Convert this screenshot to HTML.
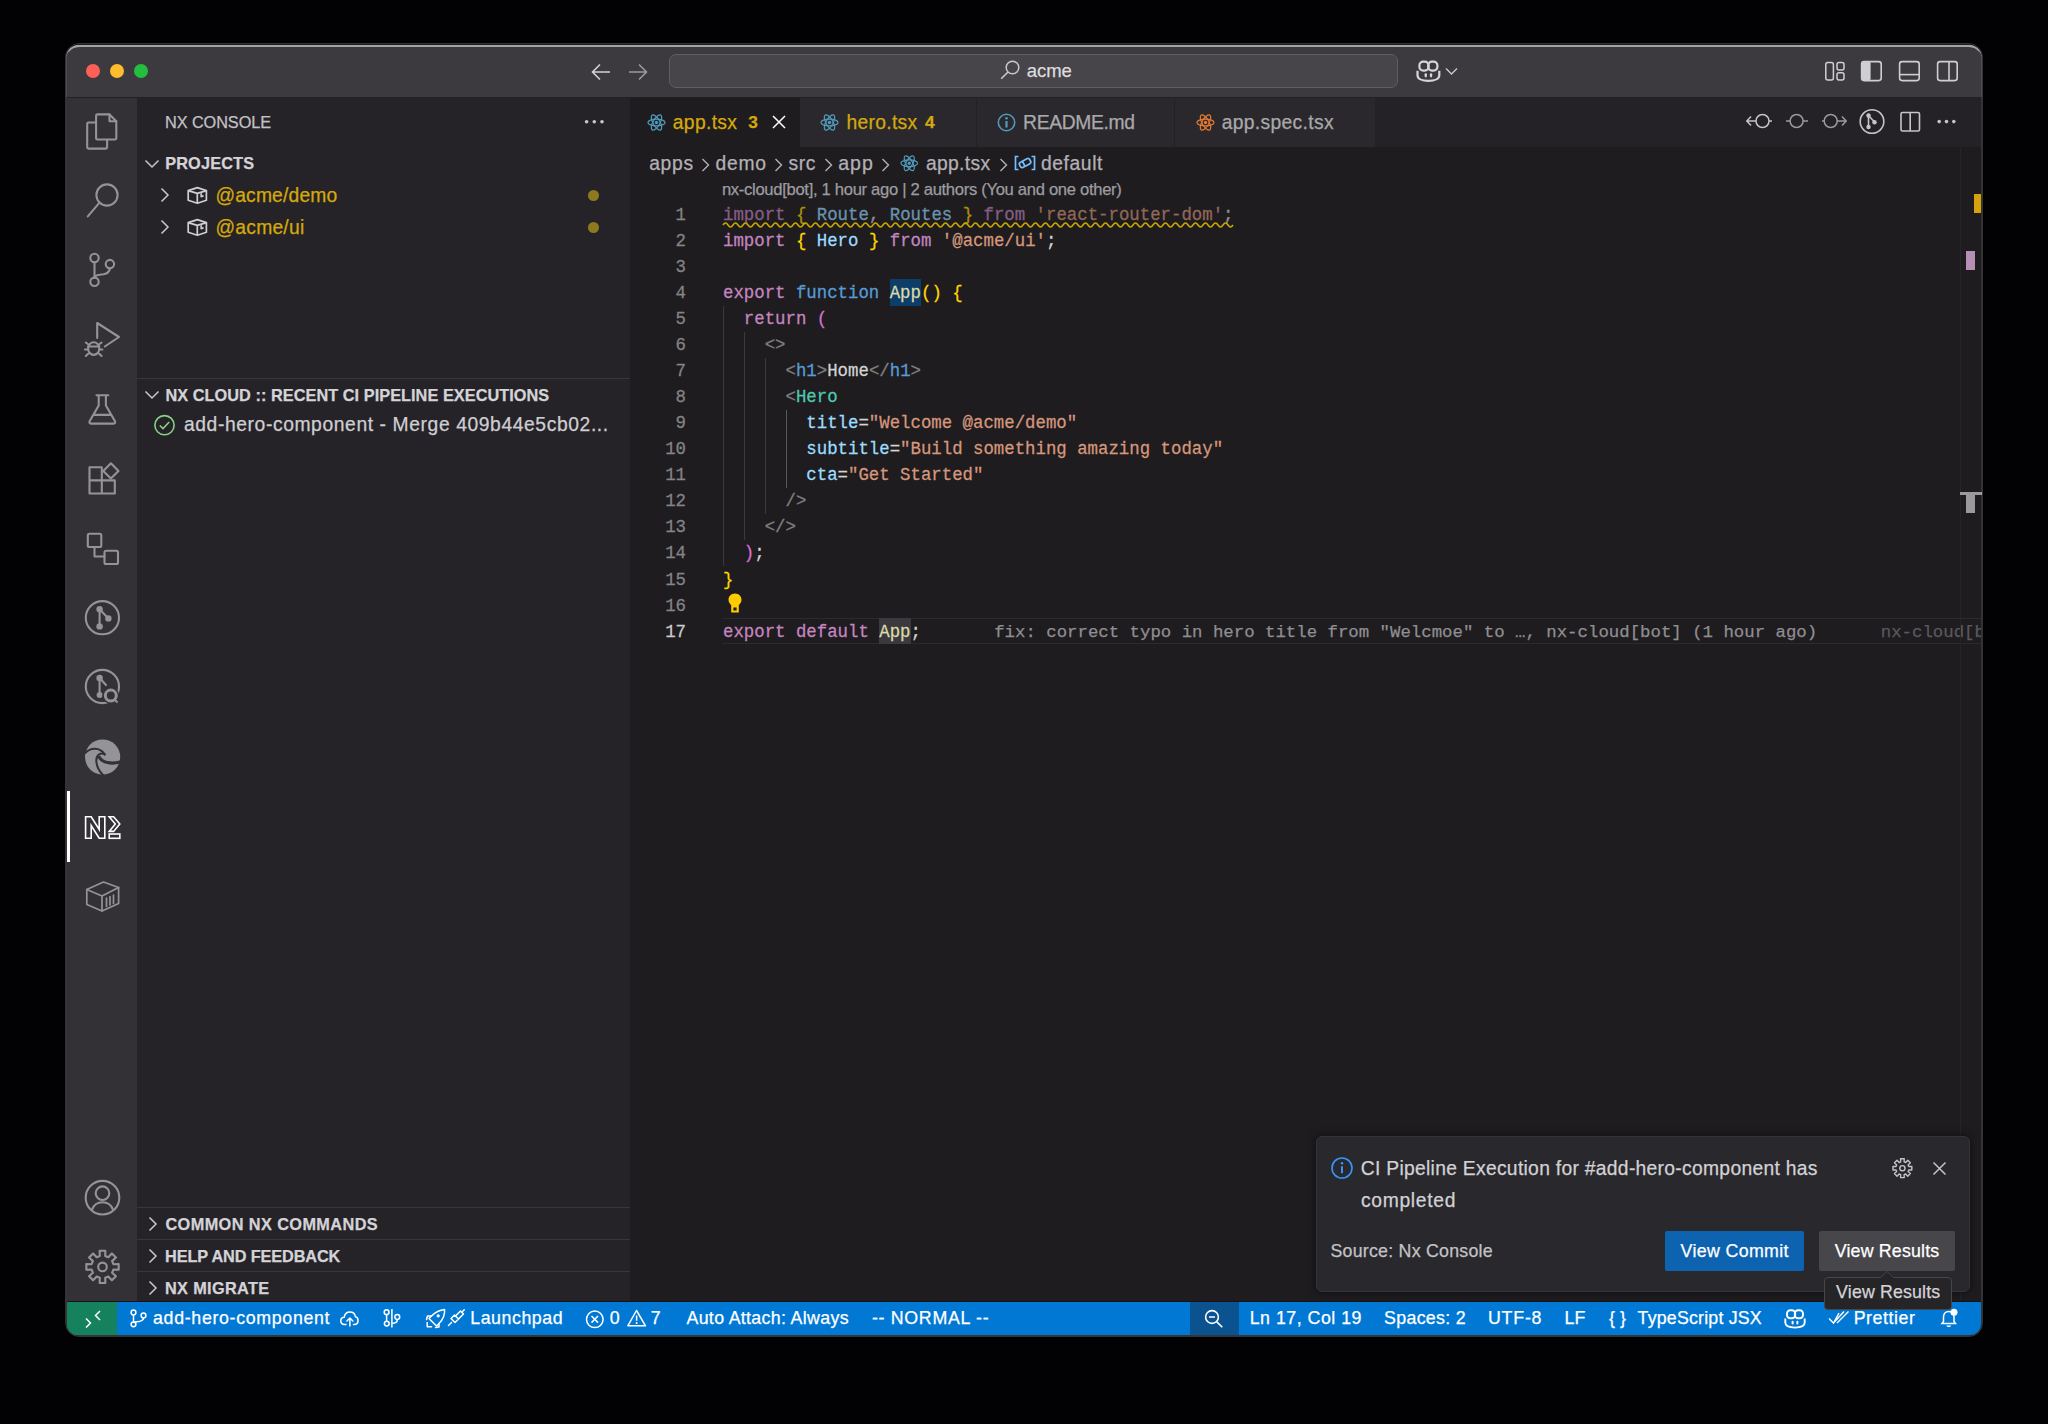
<!DOCTYPE html>
<html><head><meta charset="utf-8">
<style>
*{box-sizing:border-box;margin:0;padding:0}
html,body{width:2048px;height:1424px;background:#020204;overflow:hidden;font-family:"Liberation Sans",sans-serif;position:relative}
.a{position:absolute}
.t{position:absolute;white-space:pre;line-height:1;-webkit-text-stroke:0.25px currentColor}
svg{position:absolute;overflow:visible}
</style></head>
<body>
<div class="a" style="left:65px;top:42.5px;width:1918px;height:1294.5px;background:transparent;border:1px solid rgba(110,110,114,0.45);border-radius:14px;"></div>
<div class="a" style="left:66px;top:44px;width:1916px;height:1292px;background:#1e1c1f;border-radius:13px;"></div>
<div class="a" style="left:66px;top:44.8px;width:1916px;height:52.2px;background:#3c3a3e;border-radius:13px 13px 0 0;border-top:2.2px solid #a3a2a5;"></div>
<div class="a" style="left:86px;top:64px;width:14px;height:14px;background:#fe5f57;border-radius:50%;"></div>
<div class="a" style="left:110px;top:64px;width:14px;height:14px;background:#febc2e;border-radius:50%;"></div>
<div class="a" style="left:134px;top:64px;width:14px;height:14px;background:#24be3e;border-radius:50%;"></div>
<svg style="left:591px;top:63px" width="20" height="18" viewBox="0 0 20 18"><path d="M19 9H2M9 1.5L1.5 9 9 16.5" fill="none" stroke="#d2d1d4" stroke-width="1.6"/></svg>
<svg style="left:628px;top:63px" width="20" height="18" viewBox="0 0 20 18"><path d="M1 9H18M11 1.5L18.5 9 11 16.5" fill="none" stroke="#9a999c" stroke-width="1.6"/></svg>
<div class="a" style="left:669px;top:54px;width:729px;height:34px;background:#47454a;border-radius:7px;border:1.5px solid #5f5d62;"></div>
<svg style="left:999px;top:59px" width="22" height="22" viewBox="0 0 22 22"><circle cx="13.5" cy="8.5" r="6.3" fill="none" stroke="#c9c8cb" stroke-width="1.5"/><path d="M9 13L2.2 19.8" stroke="#c9c8cb" stroke-width="1.6"/></svg>
<div class="t" style="left:1026.81px;top:62.24px;font-size:18.5px;color:#dddcdf;letter-spacing:-0.053px;">acme</div>
<svg style="left:1416px;top:60px" width="26" height="22" viewBox="0 0 26 22"><g fill="none" stroke="#d6d5d8" stroke-width="2.2"><rect x="3.4" y="1.6" width="9.2" height="9" rx="3.8"/><rect x="12.2" y="1.6" width="9.2" height="9" rx="3.8"/><path d="M1.5 10.8V15.2C1.5 18.8 6.2 20.8 12.4 20.8S23.3 18.8 23.3 15.2V10.8"/></g><rect x="8.6" y="13.2" width="2.3" height="4.2" rx="1.1" fill="#d6d5d8"/><rect x="13.9" y="13.2" width="2.3" height="4.2" rx="1.1" fill="#d6d5d8"/></svg>
<svg style="left:1445px;top:67px" width="14" height="9" viewBox="0 0 14 9"><path d="M1 1.5L6.5 7 12 1.5" fill="none" stroke="#c9c8cb" stroke-width="1.4"/></svg>
<svg style="left:1824px;top:61px" width="22" height="21" viewBox="0 0 22 21"><g fill="none" stroke="#cfced1" stroke-width="1.5"><rect x="1.8" y="1.4" width="7.6" height="17.6" rx="2"/><rect x="13" y="1.6" width="7" height="7.4" rx="2"/><rect x="13" y="11.8" width="7" height="7.2" rx="2"/></g></svg>
<svg style="left:1860px;top:60px" width="23" height="22" viewBox="0 0 23 22"><rect x="1.6" y="1.6" width="19.6" height="19" rx="2.5" fill="none" stroke="#cfced1" stroke-width="1.6"/><rect x="1.6" y="1.6" width="9" height="19" rx="2" fill="#cfced1"/></svg>
<svg style="left:1898px;top:60px" width="23" height="22" viewBox="0 0 23 22"><rect x="1.6" y="1.6" width="19.6" height="19" rx="2.5" fill="none" stroke="#cfced1" stroke-width="1.6"/><path d="M1.6 14.6H21.2" stroke="#cfced1" stroke-width="1.6"/></svg>
<svg style="left:1936px;top:60px" width="23" height="22" viewBox="0 0 23 22"><rect x="1.6" y="1.6" width="19.6" height="19" rx="2.5" fill="none" stroke="#cfced1" stroke-width="1.6"/><path d="M13 1.6V20.6" stroke="#cfced1" stroke-width="1.6"/></svg>
<div class="a" style="left:67px;top:97px;width:70px;height:1206px;background:#333136;"></div>
<div class="a" style="left:137px;top:97px;width:493px;height:1206px;background:#252328;"></div>
<div class="a" style="left:630px;top:97px;width:1351px;height:1206px;background:#1e1c1f;"></div>
<div class="a" style="left:630px;top:97px;width:1351px;height:50px;background:#242226;"></div>
<div class="a" style="left:630px;top:97px;width:170px;height:50px;background:#1e1c1f;"></div>
<div class="a" style="left:800px;top:97px;width:177px;height:50px;background:#2a282c;border-right:1px solid #232125;"></div>
<div class="a" style="left:977px;top:97px;width:198px;height:50px;background:#2a282c;border-right:1px solid #232125;"></div>
<div class="a" style="left:1175px;top:97px;width:200px;height:50px;background:#2a282c;"></div>
<svg style="left:646.5px;top:112.5px" width="19" height="19" viewBox="0 0 20 20"><g fill="none" stroke="#519aba" stroke-width="1.3"><ellipse cx="10" cy="10" rx="9" ry="3.6"/><ellipse cx="10" cy="10" rx="9" ry="3.6" transform="rotate(60 10 10)"/><ellipse cx="10" cy="10" rx="9" ry="3.6" transform="rotate(120 10 10)"/></g><circle cx="10" cy="10" r="1.8" fill="#519aba"/></svg>
<div class="t" style="left:672.78px;top:112.56px;font-size:19.3px;color:#d4a90c;letter-spacing:0.345px;">app.tsx</div>
<div class="t" style="left:748.21px;top:114.26px;font-size:17.3px;color:#d4a90c;font-weight:bold;letter-spacing:0.000px;">3</div>
<svg style="left:772px;top:115px" width="14" height="14" viewBox="0 0 14 14"><path d="M1 1L13 13M13 1L1 13" stroke="#ffffff" stroke-width="1.5"/></svg>
<svg style="left:820px;top:112.5px" width="19" height="19" viewBox="0 0 20 20"><g fill="none" stroke="#519aba" stroke-width="1.3"><ellipse cx="10" cy="10" rx="9" ry="3.6"/><ellipse cx="10" cy="10" rx="9" ry="3.6" transform="rotate(60 10 10)"/><ellipse cx="10" cy="10" rx="9" ry="3.6" transform="rotate(120 10 10)"/></g><circle cx="10" cy="10" r="1.8" fill="#519aba"/></svg>
<div class="t" style="left:846.60px;top:112.56px;font-size:19.3px;color:#d4a90c;letter-spacing:0.277px;">hero.tsx</div>
<div class="t" style="left:924.94px;top:114.26px;font-size:17.3px;color:#d4a90c;font-weight:bold;letter-spacing:0.000px;">4</div>
<svg style="left:997px;top:112.5px" width="19" height="19" viewBox="0 0 19 19"><circle cx="9.5" cy="9.5" r="8.2" fill="none" stroke="#519aba" stroke-width="1.6"/><rect x="8.4" y="8" width="2.2" height="6.5" fill="#519aba"/><circle cx="9.5" cy="5.3" r="1.3" fill="#519aba"/></svg>
<div class="t" style="left:1023.11px;top:112.56px;font-size:19.3px;color:#a9a8ab;letter-spacing:-0.355px;">README.md</div>
<svg style="left:1195.5px;top:112.5px" width="19" height="19" viewBox="0 0 20 20"><g fill="none" stroke="#e37933" stroke-width="1.3"><ellipse cx="10" cy="10" rx="9" ry="3.6"/><ellipse cx="10" cy="10" rx="9" ry="3.6" transform="rotate(60 10 10)"/><ellipse cx="10" cy="10" rx="9" ry="3.6" transform="rotate(120 10 10)"/></g><circle cx="10" cy="10" r="1.8" fill="#e37933"/></svg>
<div class="t" style="left:1221.68px;top:112.56px;font-size:19.3px;color:#a9a8ab;letter-spacing:0.331px;">app.spec.tsx</div>
<svg style="left:1745px;top:112px" width="28" height="20" viewBox="0 0 28 20"><g fill="none" stroke="#c5c5c5" stroke-width="1.5"><circle cx="17.5" cy="9" r="6.5"/><path d="M11 9H2M6 4.5L1.8 9 6 13.5M24 9h3"/></g></svg>
<svg style="left:1784px;top:112px" width="28" height="20" viewBox="0 0 28 20"><g fill="none" stroke="#9a999c" stroke-width="1.5"><circle cx="12.6" cy="9" r="6.5"/><path d="M2 9h4M19 9h5"/></g></svg>
<svg style="left:1821px;top:112px" width="28" height="20" viewBox="0 0 28 20"><g fill="none" stroke="#9a999c" stroke-width="1.5"><circle cx="9.7" cy="9" r="6.5"/><path d="M16 9h9M21 4.5L25.2 9 21 13.5M1 9h2"/></g></svg>
<svg style="left:1859px;top:108px" width="26" height="26" viewBox="0 0 26 26"><g fill="none" stroke="#c5c5c5" stroke-width="1.6"><circle cx="13" cy="13.5" r="11.8"/><path d="M9.5 7.5V19M9.5 7.5L15.5 14"/></g><circle cx="9.5" cy="7.5" r="2.2" fill="#c5c5c5"/><circle cx="15.5" cy="14.2" r="2.2" fill="#c5c5c5"/><circle cx="9.5" cy="19" r="2.2" fill="#c5c5c5"/></svg>
<svg style="left:1900px;top:111px" width="21" height="21" viewBox="0 0 21 21"><g fill="none" stroke="#c5c5c5" stroke-width="1.6"><rect x="1" y="1.5" width="18.5" height="18.5" rx="1.5"/><path d="M10.2 1.5V20"/></g></svg>
<svg style="left:1937px;top:119px" width="20" height="6" viewBox="0 0 20 6"><circle cx="2.2" cy="2.6" r="1.8" fill="#c5c5c5"/><circle cx="9.5" cy="2.6" r="1.8" fill="#c5c5c5"/><circle cx="16.8" cy="2.6" r="1.8" fill="#c5c5c5"/></svg>
<div class="t" style="left:649.18px;top:153.96px;font-size:19.3px;color:#b3b1b6;letter-spacing:0.688px;">apps</div>
<svg style="left:701px;top:157.5px" width="9" height="14" viewBox="0 0 9 14"><path d="M1.5 1L7.5 7 1.5 13" fill="none" stroke="#b3b1b6" stroke-width="1.4"/></svg>
<div class="t" style="left:715.48px;top:153.96px;font-size:19.3px;color:#b3b1b6;letter-spacing:0.781px;">demo</div>
<svg style="left:774px;top:157.5px" width="9" height="14" viewBox="0 0 9 14"><path d="M1.5 1L7.5 7 1.5 13" fill="none" stroke="#b3b1b6" stroke-width="1.4"/></svg>
<div class="t" style="left:788.47px;top:153.96px;font-size:19.3px;color:#b3b1b6;letter-spacing:0.648px;">src</div>
<svg style="left:824px;top:157.5px" width="9" height="14" viewBox="0 0 9 14"><path d="M1.5 1L7.5 7 1.5 13" fill="none" stroke="#b3b1b6" stroke-width="1.4"/></svg>
<div class="t" style="left:838.17px;top:153.73px;font-size:19.58px;color:#b3b1b6;letter-spacing:0.979px;">app</div>
<svg style="left:881px;top:157.5px" width="9" height="14" viewBox="0 0 9 14"><path d="M1.5 1L7.5 7 1.5 13" fill="none" stroke="#b3b1b6" stroke-width="1.4"/></svg>
<svg style="left:900px;top:154px" width="18.5" height="18.5" viewBox="0 0 20 20"><g fill="none" stroke="#519aba" stroke-width="1.3"><ellipse cx="10" cy="10" rx="9" ry="3.6"/><ellipse cx="10" cy="10" rx="9" ry="3.6" transform="rotate(60 10 10)"/><ellipse cx="10" cy="10" rx="9" ry="3.6" transform="rotate(120 10 10)"/></g><circle cx="10" cy="10" r="1.8" fill="#519aba"/></svg>
<div class="t" style="left:925.88px;top:153.96px;font-size:19.3px;color:#b3b1b6;letter-spacing:0.345px;">app.tsx</div>
<svg style="left:999px;top:157.5px" width="9" height="14" viewBox="0 0 9 14"><path d="M1.5 1L7.5 7 1.5 13" fill="none" stroke="#b3b1b6" stroke-width="1.4"/></svg>
<svg style="left:1014px;top:155px" width="22" height="16" viewBox="0 0 22 16"><g fill="none" stroke="#75beff" stroke-width="1.7"><path d="M4.5 1.5H1.5V14.5H4.5M17.5 1.5H20.5V14.5H17.5"/><g transform="rotate(-28 11 8)"><rect x="5.2" y="5.2" width="11.6" height="5.8" rx="2.2"/><path d="M9.5 5.2V11"/></g></g></svg>
<div class="t" style="left:1040.88px;top:153.96px;font-size:19.3px;color:#b3b1b6;letter-spacing:0.603px;">default</div>
<div class="t" style="left:721.92px;top:182.45px;font-size:16.6px;color:#9d9ca0;letter-spacing:-0.305px;">nx-cloud[bot], 1 hour ago | 2 authors (You and one other)</div>
<div class="a" style="left:722px;top:618px;width:1259px;height:26px;background:transparent;border-top:1.5px solid #2c2a2e;border-bottom:1.5px solid #2c2a2e;"></div>
<div class="a" style="left:889.88px;top:279.48px;width:31.29px;height:26.06px;background:#0d3e69;"></div>
<div class="a" style="left:879.45px;top:618.26px;width:31.29px;height:26.06px;background:#3a393d;"></div>
<div class="a" style="left:723.0px;top:305.54px;width:1.3px;height:260.59999999999997px;background:#3a393d;"></div>
<div class="a" style="left:743.86px;top:331.6px;width:1.3px;height:208.48px;background:#3a393d;"></div>
<div class="a" style="left:764.72px;top:357.65999999999997px;width:1.3px;height:156.35999999999999px;background:#3a393d;"></div>
<div class="a" style="left:785.58px;top:409.78px;width:1.3px;height:78.17999999999999px;background:#58575b;"></div>
<div class="t" style="left:675.57px;top:206.69px;font-size:17.38px;color:#858487;font-family:'Liberation Mono',monospace;transform:scaleY(1.1);transform-origin:0 13.31px;">1</div>
<div class="t" style="left:675.57px;top:232.75px;font-size:17.38px;color:#858487;font-family:'Liberation Mono',monospace;transform:scaleY(1.1);transform-origin:0 13.31px;">2</div>
<div class="t" style="left:675.57px;top:258.81px;font-size:17.38px;color:#858487;font-family:'Liberation Mono',monospace;transform:scaleY(1.1);transform-origin:0 13.31px;">3</div>
<div class="t" style="left:675.57px;top:284.87px;font-size:17.38px;color:#858487;font-family:'Liberation Mono',monospace;transform:scaleY(1.1);transform-origin:0 13.31px;">4</div>
<div class="t" style="left:675.57px;top:310.93px;font-size:17.38px;color:#858487;font-family:'Liberation Mono',monospace;transform:scaleY(1.1);transform-origin:0 13.31px;">5</div>
<div class="t" style="left:675.57px;top:336.99px;font-size:17.38px;color:#858487;font-family:'Liberation Mono',monospace;transform:scaleY(1.1);transform-origin:0 13.31px;">6</div>
<div class="t" style="left:675.57px;top:363.05px;font-size:17.38px;color:#858487;font-family:'Liberation Mono',monospace;transform:scaleY(1.1);transform-origin:0 13.31px;">7</div>
<div class="t" style="left:675.57px;top:389.11px;font-size:17.38px;color:#858487;font-family:'Liberation Mono',monospace;transform:scaleY(1.1);transform-origin:0 13.31px;">8</div>
<div class="t" style="left:675.57px;top:415.17px;font-size:17.38px;color:#858487;font-family:'Liberation Mono',monospace;transform:scaleY(1.1);transform-origin:0 13.31px;">9</div>
<div class="t" style="left:665.14px;top:441.23px;font-size:17.38px;color:#858487;font-family:'Liberation Mono',monospace;transform:scaleY(1.1);transform-origin:0 13.31px;">10</div>
<div class="t" style="left:665.14px;top:467.29px;font-size:17.38px;color:#858487;font-family:'Liberation Mono',monospace;transform:scaleY(1.1);transform-origin:0 13.31px;">11</div>
<div class="t" style="left:665.14px;top:493.35px;font-size:17.38px;color:#858487;font-family:'Liberation Mono',monospace;transform:scaleY(1.1);transform-origin:0 13.31px;">12</div>
<div class="t" style="left:665.14px;top:519.41px;font-size:17.38px;color:#858487;font-family:'Liberation Mono',monospace;transform:scaleY(1.1);transform-origin:0 13.31px;">13</div>
<div class="t" style="left:665.14px;top:545.47px;font-size:17.38px;color:#858487;font-family:'Liberation Mono',monospace;transform:scaleY(1.1);transform-origin:0 13.31px;">14</div>
<div class="t" style="left:665.14px;top:571.53px;font-size:17.38px;color:#858487;font-family:'Liberation Mono',monospace;transform:scaleY(1.1);transform-origin:0 13.31px;">15</div>
<div class="t" style="left:665.14px;top:597.59px;font-size:17.38px;color:#858487;font-family:'Liberation Mono',monospace;transform:scaleY(1.1);transform-origin:0 13.31px;">16</div>
<div class="t" style="left:665.14px;top:623.65px;font-size:17.38px;color:#cccccc;font-family:'Liberation Mono',monospace;transform:scaleY(1.1);transform-origin:0 13.31px;">17</div>
<div class="t" style="left:723.00px;top:206.69px;font-size:17.38px;color:#d4d4d4;font-family:'Liberation Mono',monospace;opacity:0.62;transform:scaleY(1.07);transform-origin:0 13.31px;"><span style="color:#c586c0">import</span><span style="color:#d4d4d4"> </span><span style="color:#ffd700">{</span><span style="color:#d4d4d4"> </span><span style="color:#9cdcfe">Route</span><span style="color:#d4d4d4">, </span><span style="color:#9cdcfe">Routes</span><span style="color:#d4d4d4"> </span><span style="color:#ffd700">}</span><span style="color:#d4d4d4"> </span><span style="color:#c586c0">from</span><span style="color:#d4d4d4"> </span><span style="color:#d6977c">&#x27;react-router-dom&#x27;</span><span style="color:#d4d4d4">;</span></div>
<div class="t" style="left:723.00px;top:232.75px;font-size:17.38px;color:#d4d4d4;font-family:'Liberation Mono',monospace;transform:scaleY(1.07);transform-origin:0 13.31px;"><span style="color:#c586c0">import</span><span style="color:#d4d4d4"> </span><span style="color:#ffd700">{</span><span style="color:#d4d4d4"> </span><span style="color:#9cdcfe">Hero</span><span style="color:#d4d4d4"> </span><span style="color:#ffd700">}</span><span style="color:#d4d4d4"> </span><span style="color:#c586c0">from</span><span style="color:#d4d4d4"> </span><span style="color:#d6977c">&#x27;@acme/ui&#x27;</span><span style="color:#d4d4d4">;</span></div>
<div class="t" style="left:723.00px;top:284.87px;font-size:17.38px;color:#d4d4d4;font-family:'Liberation Mono',monospace;transform:scaleY(1.07);transform-origin:0 13.31px;"><span style="color:#c586c0">export</span><span style="color:#d4d4d4"> </span><span style="color:#569cd6">function</span><span style="color:#d4d4d4"> </span><span style="color:#dcdcaa">App</span><span style="color:#ffd700">()</span><span style="color:#d4d4d4"> </span><span style="color:#ffd700">{</span></div>
<div class="t" style="left:723.00px;top:310.93px;font-size:17.38px;color:#d4d4d4;font-family:'Liberation Mono',monospace;transform:scaleY(1.07);transform-origin:0 13.31px;"><span style="color:#d4d4d4">  </span><span style="color:#c586c0">return</span><span style="color:#d4d4d4"> </span><span style="color:#da70d6">(</span></div>
<div class="t" style="left:723.00px;top:336.99px;font-size:17.38px;color:#d4d4d4;font-family:'Liberation Mono',monospace;transform:scaleY(1.07);transform-origin:0 13.31px;"><span style="color:#d4d4d4">    </span><span style="color:#808080">&lt;&gt;</span></div>
<div class="t" style="left:723.00px;top:363.05px;font-size:17.38px;color:#d4d4d4;font-family:'Liberation Mono',monospace;transform:scaleY(1.07);transform-origin:0 13.31px;"><span style="color:#d4d4d4">      </span><span style="color:#808080">&lt;</span><span style="color:#569cd6">h1</span><span style="color:#808080">&gt;</span><span style="color:#d4d4d4">Home</span><span style="color:#808080">&lt;/</span><span style="color:#569cd6">h1</span><span style="color:#808080">&gt;</span></div>
<div class="t" style="left:723.00px;top:389.11px;font-size:17.38px;color:#d4d4d4;font-family:'Liberation Mono',monospace;transform:scaleY(1.07);transform-origin:0 13.31px;"><span style="color:#d4d4d4">      </span><span style="color:#808080">&lt;</span><span style="color:#4ec9b0">Hero</span></div>
<div class="t" style="left:723.00px;top:415.17px;font-size:17.38px;color:#d4d4d4;font-family:'Liberation Mono',monospace;transform:scaleY(1.07);transform-origin:0 13.31px;"><span style="color:#d4d4d4">        </span><span style="color:#9cdcfe">title</span><span style="color:#d4d4d4">=</span><span style="color:#d6977c">&quot;Welcome @acme/demo&quot;</span></div>
<div class="t" style="left:723.00px;top:441.23px;font-size:17.38px;color:#d4d4d4;font-family:'Liberation Mono',monospace;transform:scaleY(1.07);transform-origin:0 13.31px;"><span style="color:#d4d4d4">        </span><span style="color:#9cdcfe">subtitle</span><span style="color:#d4d4d4">=</span><span style="color:#d6977c">&quot;Build something amazing today&quot;</span></div>
<div class="t" style="left:723.00px;top:467.29px;font-size:17.38px;color:#d4d4d4;font-family:'Liberation Mono',monospace;transform:scaleY(1.07);transform-origin:0 13.31px;"><span style="color:#d4d4d4">        </span><span style="color:#9cdcfe">cta</span><span style="color:#d4d4d4">=</span><span style="color:#d6977c">&quot;Get Started&quot;</span></div>
<div class="t" style="left:723.00px;top:493.35px;font-size:17.38px;color:#d4d4d4;font-family:'Liberation Mono',monospace;transform:scaleY(1.07);transform-origin:0 13.31px;"><span style="color:#d4d4d4">      </span><span style="color:#808080">/&gt;</span></div>
<div class="t" style="left:723.00px;top:519.41px;font-size:17.38px;color:#d4d4d4;font-family:'Liberation Mono',monospace;transform:scaleY(1.07);transform-origin:0 13.31px;"><span style="color:#d4d4d4">    </span><span style="color:#808080">&lt;/&gt;</span></div>
<div class="t" style="left:723.00px;top:545.47px;font-size:17.38px;color:#d4d4d4;font-family:'Liberation Mono',monospace;transform:scaleY(1.07);transform-origin:0 13.31px;"><span style="color:#d4d4d4">  </span><span style="color:#da70d6">)</span><span style="color:#d4d4d4">;</span></div>
<div class="t" style="left:723.00px;top:571.53px;font-size:17.38px;color:#d4d4d4;font-family:'Liberation Mono',monospace;transform:scaleY(1.07);transform-origin:0 13.31px;"><span style="color:#ffd700">}</span></div>
<div class="t" style="left:723.00px;top:623.65px;font-size:17.38px;color:#d4d4d4;font-family:'Liberation Mono',monospace;transform:scaleY(1.07);transform-origin:0 13.31px;"><span style="color:#c586c0">export</span><span style="color:#d4d4d4"> </span><span style="color:#c586c0">default</span><span style="color:#d4d4d4"> </span><span style="color:#dcdcaa">App</span><span style="color:#d4d4d4">;</span></div>
<div class="t" style="left:994.18px;top:623.65px;font-size:17.38px;color:#8f8e92;font-family:'Liberation Mono',monospace;">fix: correct typo in hero title from &quot;Welcmoe&quot; to …, nx-cloud[bot] (1 hour ago)</div>
<div class="t" style="left:1880.73px;top:623.65px;font-size:17.38px;color:#5a595d;font-family:'Liberation Mono',monospace;width:100px;overflow:hidden;">nx-cloud[bot]</div>
<svg style="left:0px;top:0px" width="1" height="1" viewBox="0 0 1 1"><path d="M723 225 q2.5 -4 5 0 q2.5 4 5 0 q2.5 -4 5 0 q2.5 4 5 0 q2.5 -4 5 0 q2.5 4 5 0 q2.5 -4 5 0 q2.5 4 5 0 q2.5 -4 5 0 q2.5 4 5 0 q2.5 -4 5 0 q2.5 4 5 0 q2.5 -4 5 0 q2.5 4 5 0 q2.5 -4 5 0 q2.5 4 5 0 q2.5 -4 5 0 q2.5 4 5 0 q2.5 -4 5 0 q2.5 4 5 0 q2.5 -4 5 0 q2.5 4 5 0 q2.5 -4 5 0 q2.5 4 5 0 q2.5 -4 5 0 q2.5 4 5 0 q2.5 -4 5 0 q2.5 4 5 0 q2.5 -4 5 0 q2.5 4 5 0 q2.5 -4 5 0 q2.5 4 5 0 q2.5 -4 5 0 q2.5 4 5 0 q2.5 -4 5 0 q2.5 4 5 0 q2.5 -4 5 0 q2.5 4 5 0 q2.5 -4 5 0 q2.5 4 5 0 q2.5 -4 5 0 q2.5 4 5 0 q2.5 -4 5 0 q2.5 4 5 0 q2.5 -4 5 0 q2.5 4 5 0 q2.5 -4 5 0 q2.5 4 5 0 q2.5 -4 5 0 q2.5 4 5 0 q2.5 -4 5 0 q2.5 4 5 0 q2.5 -4 5 0 q2.5 4 5 0 q2.5 -4 5 0 q2.5 4 5 0 q2.5 -4 5 0 q2.5 4 5 0 q2.5 -4 5 0 q2.5 4 5 0 q2.5 -4 5 0 q2.5 4 5 0 q2.5 -4 5 0 q2.5 4 5 0 q2.5 -4 5 0 q2.5 4 5 0 q2.5 -4 5 0 q2.5 4 5 0 q2.5 -4 5 0 q2.5 4 5 0 q2.5 -4 5 0 q2.5 4 5 0 q2.5 -4 5 0 q2.5 4 5 0 q2.5 -4 5 0 q2.5 4 5 0 q2.5 -4 5 0 q2.5 4 5 0 q2.5 -4 5 0 q2.5 4 5 0 q2.5 -4 5 0 q2.5 4 5 0 q2.5 -4 5 0 q2.5 4 5 0 q2.5 -4 5 0 q2.5 4 5 0 q2.5 -4 5 0 q2.5 4 5 0 q2.5 -4 5 0 q2.5 4 5 0 q2.5 -4 5 0 q2.5 4 5 0 q2.5 -4 5 0 q2.5 4 5 0 q2.5 -4 5 0 q2.5 4 5 0 q2.5 -4 5 0 q2.5 4 5 0 q2.5 -4 5 0 q2.5 4 5 0 q2.5 -4 5 0 q2.5 4 5 0" fill="none" stroke="#cca700" stroke-width="1.5"/></svg>
<svg style="left:726px;top:592px" width="18" height="22" viewBox="0 0 18 22"><path d="M9 1.5C5.2 1.5 2.5 4.3 2.5 7.8 2.5 10.2 3.9 11.8 5.2 13.2V17H12.8V13.2C14.1 11.8 15.5 10.2 15.5 7.8 15.5 4.3 12.8 1.5 9 1.5Z" fill="#ffcc00"/><rect x="5.2" y="17" width="7.6" height="3.5" fill="#ffcc00"/><rect x="7.4" y="15.5" width="3.2" height="3" fill="#1e1c1f"/></svg>
<div class="a" style="left:1960px;top:147px;width:1px;height:1156px;background:#262428;"></div>
<div class="a" style="left:1974px;top:194px;width:7px;height:19px;background:#d5a20e;"></div>
<div class="a" style="left:1966px;top:251px;width:9px;height:19px;background:#b58fb4;"></div>
<div class="a" style="left:1960px;top:492px;width:22px;height:3px;background:#9a999c;"></div>
<div class="a" style="left:1966px;top:492px;width:9px;height:21px;background:#9a999c;"></div>
<svg style="left:0px;top:0px" width="1" height="1" viewBox="0 0 1 1"><g fill="none" stroke="#949397" stroke-width="2.1" stroke-linejoin="round" stroke-linecap="round"><path d="M95.2 122.5H88.5Q87.2 122.5 87.2 123.8V147.3Q87.2 148.6 88.5 148.6H105.8Q107.1 148.6 107.1 147.3V140"/><path d="M97.4 114.4H109.5L116.3 121.2V138.2Q116.3 139.5 115 139.5H97.4Q96.1 139.5 96.1 138.2V115.7Q96.1 114.4 97.4 114.4Z"/><path d="M109.5 114.4V121.2H116.3"/><circle cx="107" cy="195" r="10.6"/><path d="M99.5 202.6L87.8 216.4"/><circle cx="94.5" cy="258" r="4.2"/><circle cx="109.9" cy="264.1" r="4.2"/><circle cx="94.5" cy="281.8" r="4.2"/><path d="M94.5 262.2V277.6"/><path d="M109.9 268.3C109.9 273 105 274.5 100 274.8 96.5 275 94.5 276.5 94.5 277.6"/><path d="M97.2 338V323L119 337 104.8 346.5"/><ellipse cx="93.7" cy="348.6" rx="5.6" ry="6.3"/><path d="M88.1 346.5H99.3M85.8 342.5L88.5 344.5M101.6 342.5L98.9 344.5M85 349.5H88.1M99.3 349.5H102.4M85.8 356L88.5 353.5M101.6 356L98.9 353.5"/><path d="M96.5 395.2H108.3M98.7 395.2V405.5L89.6 421.3Q88.9 423.6 91 423.6H113.6Q115.7 423.6 115 421.3L105.9 405.5V395.2M93.4 414.9H111.2"/><path d="M89.5 467.3H101.8V493.5H89.5ZM89.5 480.4H114.8V493.5H101.8M101.8 480.4"/><path d="M110.9 463.3L118.5 471 110.9 478.6 103.3 471Z"/><rect x="87.8" y="533.8" width="13.5" height="13.2" rx="1.6"/><rect x="104.5" y="550.8" width="13.5" height="13.2" rx="1.6"/><path d="M94.5 547V556.5H104.5"/><circle cx="102.4" cy="617.7" r="16.6"/><path d="M99.6 609.2V626.4M99.6 609.2L108.4 618.4"/><circle cx="102.4" cy="686.5" r="16.6"/><path d="M99.6 678V695M99.6 678L106 685"/><circle cx="102.5" cy="1197.7" r="16.8"/><circle cx="102.5" cy="1193.2" r="6.8"/><path d="M92.3 1209.2C94 1204.5 98 1202.2 102.5 1202.2S111 1204.5 112.7 1209.2"/><path d="M99.79 1256.03 L99.65 1250.75 L105.35 1250.75 L105.21 1256.03 L108.27 1257.30 L111.91 1253.47 L115.93 1257.49 L112.10 1261.13 L113.37 1264.19 L118.65 1264.05 L118.65 1269.75 L113.37 1269.61 L112.10 1272.67 L115.93 1276.31 L111.91 1280.33 L108.27 1276.50 L105.21 1277.77 L105.35 1283.05 L99.65 1283.05 L99.79 1277.77 L96.73 1276.50 L93.09 1280.33 L89.07 1276.31 L92.90 1272.67 L91.63 1269.61 L86.35 1269.75 L86.35 1264.05 L91.63 1264.19 L92.90 1261.13 L89.07 1257.49 L93.09 1253.47 L96.73 1257.30Z"/><circle cx="102.5" cy="1266.9" r="4.3"/></g></svg>
<svg style="left:0px;top:0px" width="1" height="1" viewBox="0 0 1 1"><g fill="#949397"><circle cx="99.6" cy="609.2" r="3.2"/><circle cx="108.4" cy="618.4" r="3.2"/><circle cx="99.6" cy="626.4" r="3.2"/><circle cx="99.6" cy="678" r="3.2"/><circle cx="99.6" cy="695" r="3"/></g></svg>
<svg style="left:0px;top:0px" width="1" height="1" viewBox="0 0 1 1"><circle cx="110.8" cy="695.6" r="8.4" fill="#333136"/><circle cx="110.8" cy="695.6" r="5.5" fill="none" stroke="#949397" stroke-width="3"/><path d="M115 700L117.5 702.5" stroke="#949397" stroke-width="2"/></svg>
<svg style="left:0px;top:0px" width="1" height="1" viewBox="0 0 1 1"><circle cx="102.6" cy="757" r="17.6" fill="#949397"/><g fill="none" stroke="#333136" stroke-linecap="round"><path d="M85.2 753C90 747.5 100 746.5 104.8 754.5" stroke-width="2"/><path d="M104.8 754.5C101.5 752 96 754.5 96.3 761 96.6 767 99.5 771.5 103 775" stroke-width="2"/><path d="M99.5 757.5C102.5 762.5 111 764.5 120 762" stroke-width="3.2"/></g></svg>
<svg style="left:0px;top:0px" width="1" height="1" viewBox="0 0 1 1"><g fill="none" stroke="#ffffff" stroke-width="1.6" stroke-linejoin="miter"><path d="M85.6 816.8H91.2L99.2 829.5V816.8H104.8V838.3H99.2L91.2 825.6V838.3H85.6Z"/><path d="M109.2 816.8H113.6L119.8 824.1 113.6 831.4H109.2L115.3 824.1Z"/><rect x="109.2" y="834" width="10.6" height="4.3"/></g></svg>
<div class="a" style="left:67px;top:791px;width:3px;height:71px;background:#ffffff;"></div>
<svg style="left:0px;top:0px" width="1" height="1" viewBox="0 0 1 1"><g fill="none" stroke="#949397" stroke-width="1.7" stroke-linejoin="round" stroke-linecap="round"><path d="M86.8 889.5L103.5 882 118.6 887.5V903.5L102 911 86.8 904.5Z"/><path d="M86.8 889.5L102 896 118.6 887.5M102 896V911"/><path d="M106.5 898V906.5M110 896.5V905M113.5 895V903.5"/></g></svg>
<div class="t" style="left:164.96px;top:114.40px;font-size:16.3px;color:#c3c2c6;letter-spacing:-0.072px;">NX CONSOLE</div>
<svg style="left:584px;top:119px" width="22" height="6" viewBox="0 0 22 6"><g fill="#c8c7cb"><circle cx="2.6" cy="2.8" r="1.8"/><circle cx="10.3" cy="2.8" r="1.8"/><circle cx="18" cy="2.8" r="1.8"/></g></svg>
<svg style="left:144px;top:159px" width="16" height="10" viewBox="0 0 16 10"><path d="M1.5 1.5L8 8 14.5 1.5" fill="none" stroke="#c8c7cb" stroke-width="1.5"/></svg>
<div class="t" style="left:165.20px;top:155.40px;font-size:16.3px;color:#d4d3d7;font-weight:bold;letter-spacing:0.156px;">PROJECTS</div>
<svg style="left:160px;top:187px" width="10" height="16" viewBox="0 0 10 16"><path d="M1.5 1.5L8 8 1.5 14.5" fill="none" stroke="#c8c7cb" stroke-width="1.5"/></svg>
<svg style="left:0px;top:0px" width="1" height="1" viewBox="0 0 1 1"><g fill="none" stroke="#cfced2" stroke-width="1.7" stroke-linejoin="round"><path d="M197.3 187.6L206.4 190.6V200.2L197.3 203.2 188.2 200.2V190.6Z"/><path d="M188.2 190.6L197.3 193.4 206.4 190.6M197.3 193.4V203.2"/><path d="M201.2 193.2V196.6L203.6 195.8"/></g></svg>
<div class="t" style="left:215.50px;top:185.66px;font-size:19.3px;color:#d4a90c;letter-spacing:0.154px;">@acme/demo</div>
<div class="a" style="left:588px;top:189.5px;width:11px;height:11px;background:#8d7a1f;border-radius:50%;"></div>
<svg style="left:160px;top:219px" width="10" height="16" viewBox="0 0 10 16"><path d="M1.5 1.5L8 8 1.5 14.5" fill="none" stroke="#c8c7cb" stroke-width="1.5"/></svg>
<svg style="left:0px;top:32px" width="1" height="1" viewBox="0 0 1 1"><g fill="none" stroke="#cfced2" stroke-width="1.7" stroke-linejoin="round"><path d="M197.3 187.6L206.4 190.6V200.2L197.3 203.2 188.2 200.2V190.6Z"/><path d="M188.2 190.6L197.3 193.4 206.4 190.6M197.3 193.4V203.2"/><path d="M201.2 193.2V196.6L203.6 195.8"/></g></svg>
<div class="t" style="left:215.50px;top:217.66px;font-size:19.3px;color:#d4a90c;letter-spacing:0.230px;">@acme/ui</div>
<div class="a" style="left:588px;top:221.5px;width:11px;height:11px;background:#8d7a1f;border-radius:50%;"></div>
<div class="a" style="left:137px;top:378px;width:493px;height:1px;background:#38363a;"></div>
<svg style="left:144px;top:390px" width="16" height="10" viewBox="0 0 16 10"><path d="M1.5 1.5L8 8 14.5 1.5" fill="none" stroke="#c8c7cb" stroke-width="1.5"/></svg>
<div class="t" style="left:165.50px;top:386.50px;font-size:16.3px;color:#d4d3d7;font-weight:bold;letter-spacing:0.049px;">NX CLOUD :: RECENT CI PIPELINE EXECUTIONS</div>
<svg style="left:153px;top:414px" width="23" height="23" viewBox="0 0 23 23"><circle cx="11.5" cy="11.2" r="9.6" fill="none" stroke="#89d185" stroke-width="1.6"/><path d="M6.8 11.5L10 14.6 16.2 8" fill="none" stroke="#89d185" stroke-width="1.6"/></svg>
<div class="t" style="left:183.98px;top:415.36px;font-size:19.3px;color:#cfced2;letter-spacing:0.594px;">add-hero-component - Merge 409b44e5cb02...</div>
<div class="a" style="left:137px;top:1207px;width:493px;height:1px;background:#38363a;"></div>
<svg style="left:147.5px;top:1216px" width="10" height="16" viewBox="0 0 10 16"><path d="M1.5 1.5L8 8 1.5 14.5" fill="none" stroke="#c8c7cb" stroke-width="1.5"/></svg>
<div class="t" style="left:165.45px;top:1215.60px;font-size:16.3px;color:#d4d3d7;font-weight:bold;letter-spacing:0.409px;">COMMON NX COMMANDS</div>
<div class="a" style="left:137px;top:1239px;width:493px;height:1px;background:#38363a;"></div>
<svg style="left:147.5px;top:1248px" width="10" height="16" viewBox="0 0 10 16"><path d="M1.5 1.5L8 8 1.5 14.5" fill="none" stroke="#c8c7cb" stroke-width="1.5"/></svg>
<div class="t" style="left:165.00px;top:1247.60px;font-size:16.3px;color:#d4d3d7;font-weight:bold;letter-spacing:-0.121px;">HELP AND FEEDBACK</div>
<div class="a" style="left:137px;top:1271px;width:493px;height:1px;background:#38363a;"></div>
<svg style="left:147.5px;top:1280px" width="10" height="16" viewBox="0 0 10 16"><path d="M1.5 1.5L8 8 1.5 14.5" fill="none" stroke="#c8c7cb" stroke-width="1.5"/></svg>
<div class="t" style="left:165.00px;top:1279.60px;font-size:16.3px;color:#d4d3d7;font-weight:bold;letter-spacing:0.346px;">NX MIGRATE</div>
<div class="a" style="left:67px;top:1301px;width:1914px;height:1px;background:#161416;"></div>
<div class="a" style="left:67px;top:1302px;width:1914px;height:33px;background:#0078d4;border-radius:0 0 11px 11px;"></div>
<div class="a" style="left:67px;top:1302px;width:50px;height:33px;background:#16825d;border-radius:0 0 0 11px;"></div>
<svg style="left:84px;top:1310px" width="18" height="18" viewBox="0 0 18 18"><g fill="none" stroke="#ffffff" stroke-width="1.5"><path d="M2 8.5L6.5 13 2 17.5"/><path d="M16 1L11.5 5.5 16 10"/></g></svg>
<svg style="left:129px;top:1309px" width="19" height="19" viewBox="0 0 19 19"><g fill="none" stroke="#ffffff" stroke-width="1.5"><circle cx="4.5" cy="3.5" r="2.4"/><circle cx="4.5" cy="15.3" r="2.4"/><circle cx="14.5" cy="6.5" r="2.4"/><path d="M4.5 6V12.9M14.5 9C14.5 12 11 12.5 8 12.8 6 13 4.5 13.5 4.5 12.9"/></g></svg>
<div class="t" style="left:153.04px;top:1309.73px;font-size:17.8px;color:#ffffff;letter-spacing:0.674px;">add-hero-component</div>
<svg style="left:0px;top:0px" width="1" height="1" viewBox="0 0 1 1"><g fill="none" stroke="#ffffff" stroke-width="1.5" stroke-linecap="round" stroke-linejoin="round"><path d="M346 1324.5H344.5C342.3 1324.5 340.8 1322.8 340.8 1320.8 340.8 1318.8 342.3 1317.3 344.2 1317.2 344.7 1314.2 347 1312 349.9 1312 352.7 1312 355 1314 355.4 1316.7 357.2 1316.9 358 1318.6 358 1320.5 358 1322.8 356.4 1324.5 354.3 1324.5H353.5"/><path d="M349.9 1326V1318M346.9 1321L349.9 1318 352.9 1321"/></g></svg>
<svg style="left:0px;top:0px" width="1" height="1" viewBox="0 0 1 1"><g fill="none" stroke="#ffffff" stroke-width="1.5"><circle cx="386.6" cy="1312.2" r="2.4"/><circle cx="386.8" cy="1323.6" r="2.4"/><circle cx="397.3" cy="1317" r="2.4"/><path d="M386.6 1314.6V1321.2M391.9 1309V1327.5M397.3 1319.4C397.3 1322 395.5 1323.3 392 1323.3"/></g></svg>
<svg style="left:0px;top:0px" width="1" height="1" viewBox="0 0 1 1"><g fill="none" stroke="#ffffff" stroke-width="1.5" stroke-linejoin="round" stroke-linecap="round"><path d="M444.6 1309.5C439.5 1310 435 1312.5 431.5 1316L429 1318.5 436.5 1326 439 1323.5C442.5 1320 445 1315.5 444.6 1309.5Z"/><path d="M431.5 1316H427.5L426.5 1319.5M439 1323.5V1327L435.5 1327.5M427.2 1322.5V1326.8H431.5"/><circle cx="438.2" cy="1315.8" r="0.9" fill="#ffffff"/><path d="M448.5 1325.5L451.5 1322.5M462 1312L464.3 1309.7M451 1318.5L455 1322.5 458.5 1319 454.5 1315Z"/><path d="M455.5 1316L460.5 1311 463.5 1314 458.5 1319"/></g></svg>
<div class="t" style="left:470.23px;top:1309.73px;font-size:17.8px;color:#ffffff;letter-spacing:0.552px;">Launchpad</div>
<svg style="left:585px;top:1310px" width="20" height="20" viewBox="0 0 20 20"><g fill="none" stroke="#ffffff" stroke-width="1.5"><circle cx="9.8" cy="9.3" r="8.3"/><path d="M6.5 6L13 12.6M13 6L6.5 12.6"/></g></svg>
<div class="t" style="left:609.80px;top:1309.73px;font-size:17.8px;color:#ffffff;">0</div>
<svg style="left:627px;top:1309px" width="20" height="18" viewBox="0 0 20 18"><g fill="none" stroke="#ffffff" stroke-width="1.5" stroke-linejoin="round"><path d="M9.5 1.5L18.5 16.8H0.8Z"/><path d="M9.6 6.5V11.8"/></g><circle cx="9.6" cy="14" r="1" fill="#ffffff"/></svg>
<div class="t" style="left:650.80px;top:1309.73px;font-size:17.8px;color:#ffffff;">7</div>
<div class="t" style="left:686.46px;top:1309.73px;font-size:17.8px;color:#ffffff;letter-spacing:0.330px;">Auto Attach: Always</div>
<div class="t" style="left:871.90px;top:1309.73px;font-size:17.8px;color:#ffffff;letter-spacing:0.699px;">-- NORMAL --</div>
<div class="a" style="left:1190px;top:1302px;width:48.5px;height:33px;background:#0a5290;"></div>
<svg style="left:1204px;top:1309px" width="20" height="20" viewBox="0 0 20 20"><g fill="none" stroke="#ffffff" stroke-width="1.6"><circle cx="8" cy="8" r="6.4"/><path d="M12.6 12.6L18.3 18.3M5 8H11"/></g></svg>
<div class="t" style="left:1249.73px;top:1309.73px;font-size:17.8px;color:#ffffff;letter-spacing:0.500px;">Ln 17, Col 19</div>
<div class="t" style="left:1384.10px;top:1309.73px;font-size:17.8px;color:#ffffff;letter-spacing:0.303px;">Spaces: 2</div>
<div class="t" style="left:1487.92px;top:1309.73px;font-size:17.8px;color:#ffffff;letter-spacing:0.804px;">UTF-8</div>
<div class="t" style="left:1564.50px;top:1309.73px;font-size:17.8px;color:#ffffff;">LF</div>
<div class="t" style="left:1609.00px;top:1309.73px;font-size:17.8px;color:#ffffff;">{ }</div>
<div class="t" style="left:1637.60px;top:1309.73px;font-size:17.8px;color:#ffffff;letter-spacing:0.199px;">TypeScript JSX</div>
<svg style="left:1784px;top:1309px" width="23" height="20" viewBox="0 0 23 20"><g fill="none" stroke="#ffffff" stroke-width="1.9"><rect x="3" y="1.2" width="8.2" height="8" rx="3.3"/><rect x="10.8" y="1.2" width="8.2" height="8" rx="3.3"/><path d="M1.3 9.6V13.6C1.3 16.8 5.4 18.6 11 18.6S20.7 16.8 20.7 13.6V9.6"/></g><rect x="7.6" y="11.8" width="2" height="3.7" rx="1" fill="#ffffff"/><rect x="12.4" y="11.8" width="2" height="3.7" rx="1" fill="#ffffff"/></svg>
<svg style="left:1828px;top:1310px" width="22" height="16" viewBox="0 0 22 16"><g fill="none" stroke="#ffffff" stroke-width="1.4"><path d="M1 8.5L5.5 13 11 3M5.5 13L16 1.5M9 13L20.5 1.5"/></g></svg>
<div class="t" style="left:1853.73px;top:1309.73px;font-size:17.8px;color:#ffffff;letter-spacing:0.539px;">Prettier</div>
<svg style="left:1940px;top:1309px" width="18" height="19" viewBox="0 0 18 19"><g fill="none" stroke="#ffffff" stroke-width="1.5"><path d="M2 14.5H15.5L14 12.5V8C14 4.8 12 2.5 8.8 2.5S3.5 4.8 3.5 8V12.5Z"/><path d="M7 16.5C7.5 17.5 10 17.5 10.5 16.5"/></g><circle cx="14" cy="3.3" r="3.5" fill="#ffffff"/></svg>
<div class="a" style="left:1316px;top:1136px;width:654px;height:156px;background:#29282c;border:1px solid #343337;border-radius:6px;box-shadow:0 0 8px rgba(0,0,0,0.55);"></div>
<svg style="left:1330px;top:1156px" width="24" height="24" viewBox="0 0 24 24"><circle cx="12" cy="12" r="10" fill="none" stroke="#3794ff" stroke-width="1.6"/><rect x="11" y="10.2" width="2" height="7" fill="#3794ff"/><circle cx="12" cy="7.3" r="1.25" fill="#3794ff"/></svg>
<div class="t" style="left:1360.74px;top:1159.26px;font-size:19.3px;color:#d2d1d5;letter-spacing:0.292px;">CI Pipeline Execution for #add-hero-component has</div>
<div class="t" style="left:1360.88px;top:1191.26px;font-size:19.3px;color:#d2d1d5;letter-spacing:0.701px;">completed</div>
<svg style="left:0px;top:0px" width="1" height="1" viewBox="0 0 1 1"><g fill="none" stroke="#c5c4c8" stroke-width="1.4" stroke-linejoin="round"><path d="M1900.69 1161.82 L1900.57 1158.78 L1904.23 1158.78 L1904.11 1161.82 L1905.70 1162.48 L1907.77 1160.24 L1910.36 1162.83 L1908.12 1164.90 L1908.78 1166.49 L1911.82 1166.37 L1911.82 1170.03 L1908.78 1169.91 L1908.12 1171.50 L1910.36 1173.57 L1907.77 1176.16 L1905.70 1173.92 L1904.11 1174.58 L1904.23 1177.62 L1900.57 1177.62 L1900.69 1174.58 L1899.10 1173.92 L1897.03 1176.16 L1894.44 1173.57 L1896.68 1171.50 L1896.02 1169.91 L1892.98 1170.03 L1892.98 1166.37 L1896.02 1166.49 L1896.68 1164.90 L1894.44 1162.83 L1897.03 1160.24 L1899.10 1162.48Z"/><circle cx="1902.4" cy="1168.2" r="2.6"/></g></svg>
<svg style="left:1932px;top:1161px" width="15" height="15" viewBox="0 0 15 15"><path d="M1.5 1.5L13.5 13.5M13.5 1.5L1.5 13.5" stroke="#c5c4c8" stroke-width="1.5"/></svg>
<div class="t" style="left:1330.50px;top:1243.03px;font-size:17.8px;color:#c3c2c6;letter-spacing:0.234px;">Source: Nx Console</div>
<div class="a" style="left:1665px;top:1231px;width:139px;height:40px;background:#0e63b0;border-radius:2px;"></div>
<div class="t" style="left:1680.61px;top:1242.63px;font-size:17.8px;color:#ffffff;letter-spacing:0.349px;">View Commit</div>
<div class="a" style="left:1818.5px;top:1231px;width:136px;height:40px;background:#47464b;border-radius:2px;"></div>
<div class="t" style="left:1834.71px;top:1242.63px;font-size:17.8px;color:#ffffff;letter-spacing:0.185px;">View Results</div>
<div class="a" style="left:1824px;top:1276.5px;width:128px;height:33px;background:#252427;border:1px solid #46454a;border-radius:4px;"></div>
<svg style="left:1880px;top:1271px" width="14" height="7" viewBox="0 0 14 7"><path d="M0.5 6.5L7 0.5 13.5 6.5" fill="#252427" stroke="#46454a" stroke-width="1"/><rect x="1" y="6" width="12" height="1.5" fill="#252427"/></svg>
<div class="t" style="left:1836.11px;top:1283.83px;font-size:17.8px;color:#d4d3d7;letter-spacing:0.140px;">View Results</div>
<div class="a" style="left:66px;top:44.8px;width:1916px;height:1291.2px;background:transparent;border:1px solid rgba(255,255,255,0.10);border-top:2.2px solid #a3a2a5;border-radius:13px 13px 12px 12px;"></div>
<div class="a" style="left:67px;top:97px;width:1914px;height:1px;background:#222024;"></div>
</body></html>
